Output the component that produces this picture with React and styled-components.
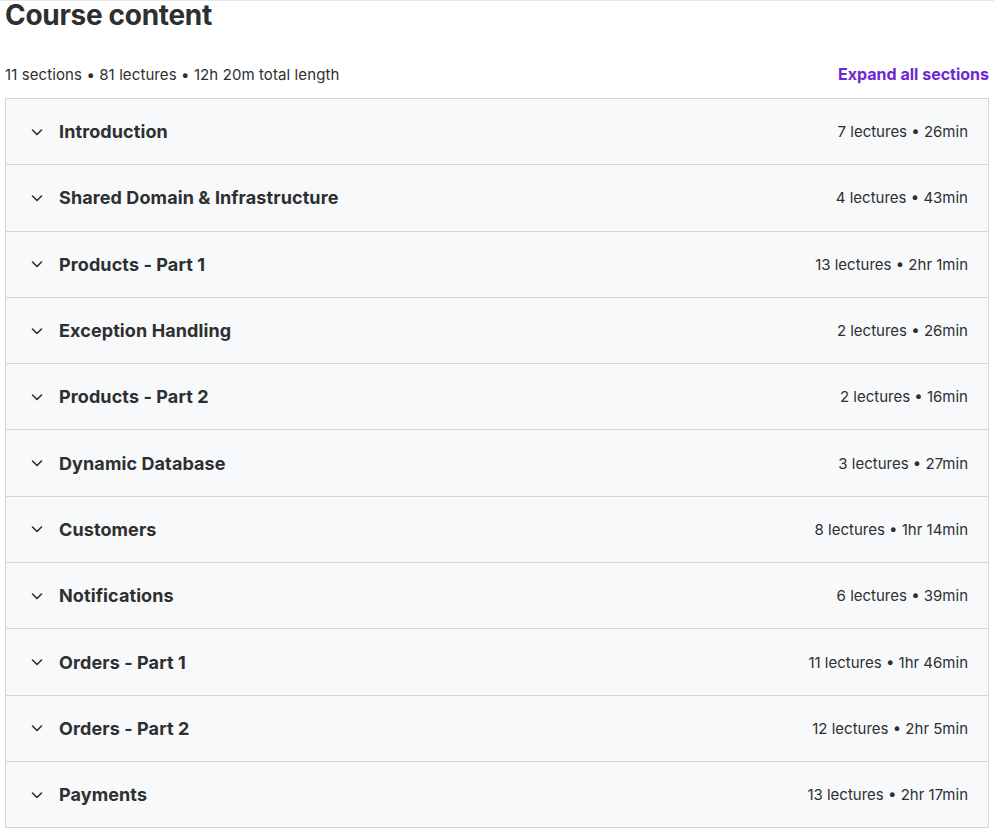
import React from 'react';
import styled, { createGlobalStyle } from 'styled-components';

const GlobalStyle = createGlobalStyle`
  html, body {
    margin: 0;
    padding: 0;
    background: #ffffff;
  }
  body {
    font-family: Inter, "Noto Sans", "Liberation Sans", sans-serif;
    color: #2d2f31;
  }
`;

const Page = styled.div`
  width: 994px;
  padding: 0 5px;
  box-sizing: border-box;
  border-top: 1px solid #e4e6e8;
`;

const Title = styled.h2`
  margin: 0;
  font-size: 28px;
  line-height: 29px;
  font-weight: 700;
  letter-spacing: -0.3px;
  color: #2d2f31;
`;

const MetaBar = styled.div`
  display: flex;
  justify-content: space-between;
  align-items: center;
  margin-top: 32px;
  height: 24px;
  margin-bottom: 12px;
`;

const Meta = styled.span`
  font-size: 15px;
  color: #2d2f31;
  letter-spacing: 0.1px;
`;

const ExpandButton = styled.button`
  background: none;
  border: none;
  padding: 0;
  font-family: inherit;
  font-size: 16px;
  font-weight: 700;
  color: #6d28d2;
  cursor: pointer;
`;

const Sections = styled.div`
  width: 984px;
  border: 1px solid #d1d7dc;
  border-bottom: none;
  box-sizing: border-box;
`;

const SectionRow = styled.div`
  display: flex;
  align-items: center;
  height: 66.3px;
  box-sizing: border-box;
  padding: 0 20px 0 24px;
  background: #f7f9fa;
  border-bottom: 1px solid #d1d7dc;
`;

const Chevron = styled.svg`
  width: 14px;
  height: 14px;
  flex: none;
  margin-right: 15px;
`;

const SectionTitle = styled.span`
  flex: 1;
  font-size: 18px;
  font-weight: 700;
  letter-spacing: 0.1px;
  color: #2d2f31;
`;

const SectionInfo = styled.span`
  font-size: 15px;
  color: #2d2f31;
`;

const sections = [
  ['Introduction', '7 lectures • 26min'],
  ['Shared Domain & Infrastructure', '4 lectures • 43min'],
  ['Products - Part 1', '13 lectures • 2hr 1min'],
  ['Exception Handling', '2 lectures • 26min'],
  ['Products - Part 2', '2 lectures • 16min'],
  ['Dynamic Database', '3 lectures • 27min'],
  ['Customers', '8 lectures • 1hr 14min'],
  ['Notifications', '6 lectures • 39min'],
  ['Orders - Part 1', '11 lectures • 1hr 46min'],
  ['Orders - Part 2', '12 lectures • 2hr 5min'],
  ['Payments', '13 lectures • 2hr 17min'],
];

const App = () => (
  <>
    <GlobalStyle />
    <Page>
      <Title>Course content</Title>
      <MetaBar>
        <Meta>11 sections • 81 lectures • 12h 20m total length</Meta>
        <ExpandButton>Expand all sections</ExpandButton>
      </MetaBar>
      <Sections>
        {sections.map(([title, info]) => (
          <SectionRow key={title}>
            <Chevron viewBox="0 0 14 14">
              <polyline points="2.5,5 7,9.5 11.5,5" fill="none" stroke="#2d2f31" strokeWidth="1.6" strokeLinecap="round" strokeLinejoin="round" />
            </Chevron>
            <SectionTitle>{title}</SectionTitle>
            <SectionInfo>{info}</SectionInfo>
          </SectionRow>
        ))}
      </Sections>
    </Page>
  </>
);

export default App;
